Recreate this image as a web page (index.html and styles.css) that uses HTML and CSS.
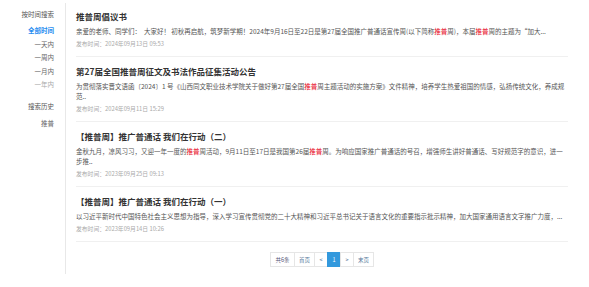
FILE: index.html
```html
<!DOCTYPE html>
<html lang="zh-CN">
<head>
    <meta charset="UTF-8">
    <meta name="viewport" content="width=device-width, initial-scale=1.0">
    <title>搜索结果</title>
    <link rel="stylesheet" href="styles.css">
</head>
<body>

    <div class="page">
        <aside class="sidebar">
            <h3 class="side-title">按时间搜索</h3>
            <ul class="time-list">
                <li class="active">全部时间</li>
                <li>一天内</li>
                <li>一周内</li>
                <li>一月内</li>
                <li class="muted">一年内</li>
            </ul>
            <h3 class="side-title history">搜索历史</h3>
            <p class="history-item">推普</p>
        </aside>

        <main class="results">
            <div class="item">
                <h2 class="item-title">推普周倡议书</h2>
                <p class="summary">亲爱的老师、同学们：&nbsp;&nbsp;大家好！ 初秋再启航，筑梦新学期！2024年9月16日至22日是第27届全国推广普通话宣传周(以下简称<span class="hl">推普</span>周)，本届<span class="hl">推普</span>周的主题为“加大...</p>
                <p class="date">发布时间：2024年09月13日 09:53</p>
            </div>

            <div class="item">
                <h2 class="item-title">第27届全国推普周征文及书法作品征集活动公告</h2>
                <p class="summary">为贯彻落实晋文语函〔2024〕1 号《山西同文职业技术学院关于做好第27届全国<span class="hl">推普</span>周主题活动的实施方案》文件精神，培养学生热爱祖国的情感，弘扬传统文化，养成规范..</p>
                <p class="date">发布时间：2024年09月11日 15:29</p>
            </div>

            <div class="item">
                <h2 class="item-title">【推普周】推广普通话 我们在行动（二）</h2>
                <p class="summary">金秋九月，凉风习习，又迎一年一度的<span class="hl">推普</span>周活动，9月11日至17日是我国第26届<span class="hl">推普</span>周。为响应国家推广普通话的号召，增强师生讲好普通话、写好规范字的意识，进一步推..</p>
                <p class="date">发布时间：2023年09月25日 09:13</p>
            </div>

            <div class="item">
                <h2 class="item-title">【推普周】推广普通话 我们在行动（一）</h2>
                <p class="summary">以习近平新时代中国特色社会主义思想为指导，深入学习宣传贯彻党的二十大精神和习近平总书记关于语言文化的重要指示批示精神，加大国家通用语言文字推广力度，...</p>
                <p class="date">发布时间：2023年09月14日 10:26</p>
            </div>

            <div class="pager">
                <span class="page-btn total">共6条</span>
                <a href="#" class="page-btn wide">首页</a>
                <a href="#" class="page-btn">&lt;</a>
                <a href="#" class="page-btn current">1</a>
                <a href="#" class="page-btn">&gt;</a>
                <a href="#" class="page-btn wide">末页</a>
            </div>
        </main>
    </div>

</body>
</html>
```

FILE: styles.css
```css
* {
    margin: 0;
    padding: 0;
    box-sizing: border-box;
    font-family: "Noto Sans CJK SC", "Liberation Sans", sans-serif;
}

body {
    background: #fff;
    color: #555;
}

.page {
    display: flex;
    margin-top: 3px;
}

/* left column */
.sidebar {
    width: 66px;
    border-right: 1px solid #e8e8e8;
    padding: 6px 11px 0 0;
    text-align: right;
    font-size: 6.5px;
}

.side-title {
    font-size: 6.5px;
    font-weight: normal;
    line-height: 10px;
    color: #555;
}

.time-list {
    list-style: none;
    margin-top: 5px;
}

.time-list li {
    line-height: 13.5px;
    color: #666;
    cursor: pointer;
}

.time-list li.active {
    color: #1f8cf0;
    font-weight: bold;
}

.time-list li.muted {
    color: #aaa;
}

.side-title.history {
    margin-top: 9.5px;
}

.history-item {
    margin-top: 7px;
    line-height: 10px;
    color: #666;
}

/* result list */
.results {
    width: 492px;
    margin-left: 10px;
    padding-bottom: 7px;
}

.item {
    padding: 8px 0 7px;
    border-bottom: 1px solid #f0f0f0;
}

.item:first-child {
    padding-top: 7px;
}

.item-title {
    font-size: 8.5px;
    font-weight: bold;
    line-height: 13px;
    color: #333;
}

.summary {
    margin-top: 3px;
    font-size: 6.5px;
    line-height: 10px;
    color: #555;
}

.hl {
    color: #e60012;
}

.date {
    margin-top: 3px;
    font-size: 5.8px;
    line-height: 10px;
    color: #aaa;
}

/* pagination */
.pager {
    display: flex;
    justify-content: center;
    margin-top: 10px;
}

.page-btn {
    display: flex;
    align-items: center;
    justify-content: center;
    width: 14px;
    height: 15px;
    border: 1px solid #e6e6e6;
    margin-left: -1px;
    font-size: 5.5px;
    color: #55779a;
    text-decoration: none;
    background: #fff;
}

.page-btn.total {
    width: 25px;
    margin-left: 0;
    color: #557;
}

.page-btn.wide {
    width: 21px;
}

.page-btn.current {
    background: #3399dd;
    border-color: #3399dd;
    color: #fff;
}
```
